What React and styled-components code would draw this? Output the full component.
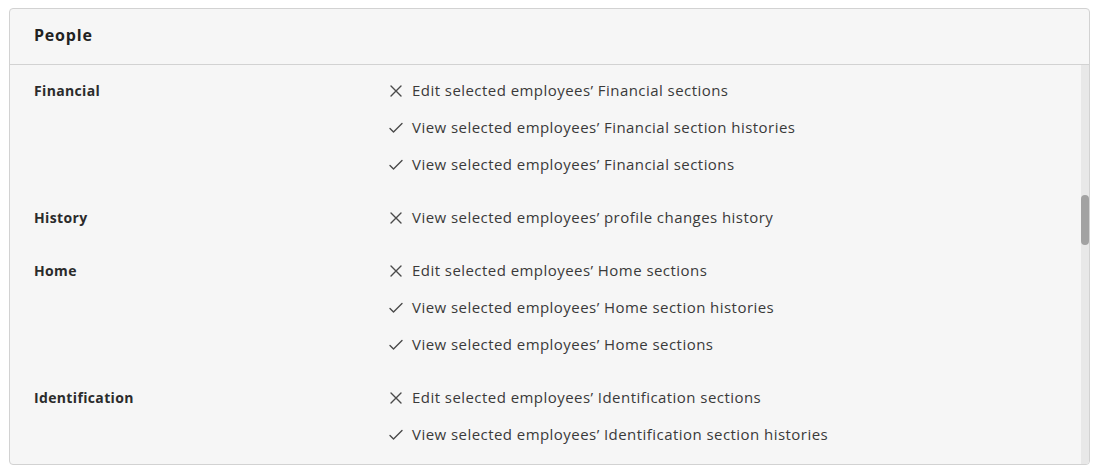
import React from "react"
import styled, { createGlobalStyle } from "styled-components"

const GlobalStyle = createGlobalStyle`
  body {
    margin: 0;
    background: #ffffff;
    font-family: "Open Sans", "Liberation Sans", sans-serif;
  }
`

const Page = styled.div`
  padding: 8px 10px 10px 9px;
`

const Card = styled.section`
  position: relative;
  height: 457px;
  box-sizing: border-box;
  border: 1px solid #d2d2d2;
  border-radius: 4px;
  background: #f6f6f6;
  display: flex;
  flex-direction: column;
  overflow: hidden;
`

const Header = styled.header`
  height: 56px;
  flex: none;
  box-sizing: border-box;
  border-bottom: 1px solid #d2d2d2;
  display: flex;
  align-items: center;
  padding: 0 24px 3px;
  font-size: 16px;
  letter-spacing: 0.8px;
  font-weight: 700;
  color: #222;
`

const Body = styled.div`
  flex: 1;
  overflow: hidden;
  padding: 15px 24px 0;
  display: flex;
  flex-direction: column;
  gap: 32px;
`

const Group = styled.div`
  display: grid;
  grid-template-columns: 354px 1fr;
`

const Label = styled.div`
  font-size: 14px;
  letter-spacing: 0.35px;
  font-weight: 700;
  color: #2b2b2b;
  line-height: 21px;
`

const Permissions = styled.ul`
  list-style: none;
  margin: 0;
  padding: 0;
  display: flex;
  flex-direction: column;
  gap: 16px;
`

const Permission = styled.li`
  display: flex;
  align-items: center;
  gap: 8px;
  font-size: 15px;
  line-height: 21px;
  color: #3a3a3a;
  letter-spacing: 0.45px;
`

const IconBox = styled.span`
  width: 16px;
  height: 16px;
  display: inline-flex;
  align-items: center;
  justify-content: center;
  color: #4a4a4a;
`

const ScrollTrack = styled.div`
  position: absolute;
  top: 56px;
  right: 0;
  bottom: 0;
  width: 8px;
  background: #e8e8e8;
`

const ScrollThumb = styled.div`
  position: absolute;
  top: 130px;
  left: 0;
  width: 8px;
  height: 50px;
  border-radius: 4px;
  background: #a2a2a2;
`

const Icon = ({ allowed }) => (
  <IconBox>
    <svg width="16" height="16" viewBox="0 0 16 16" fill="none" stroke="currentColor" strokeWidth="1.4" strokeLinecap="round" strokeLinejoin="round">
      {allowed ? (
        <path d="M2 8.5 L5.5 12 L14 3.5" />
      ) : (
        <path d="M3 3 L13 13 M13 3 L3 13" />
      )}
    </svg>
  </IconBox>
)

const groups = [
  {
    name: "Financial",
    items: [
      [false, "Edit selected employees' Financial sections"],
      [true, "View selected employees' Financial section histories"],
      [true, "View selected employees' Financial sections"],
    ],
  },
  {
    name: "History",
    items: [[false, "View selected employees' profile changes history"]],
  },
  {
    name: "Home",
    items: [
      [false, "Edit selected employees' Home sections"],
      [true, "View selected employees' Home section histories"],
      [true, "View selected employees' Home sections"],
    ],
  },
  {
    name: "Identification",
    items: [
      [false, "Edit selected employees' Identification sections"],
      [true, "View selected employees' Identification section histories"],
    ],
  },
]

const App = () => (
  <Page>
    <GlobalStyle />
    <Card>
      <Header>People</Header>
      <Body>
        {groups.map(group => (
          <Group key={group.name}>
            <Label>{group.name}</Label>
            <Permissions>
              {group.items.map(([allowed, text]) => (
                <Permission key={text}>
                  <Icon allowed={allowed} />
                  {text.replace("'", "\u2019")}
                </Permission>
              ))}
            </Permissions>
          </Group>
        ))}
      </Body>
      <ScrollTrack>
        <ScrollThumb />
      </ScrollTrack>
    </Card>
  </Page>
)

export default App
